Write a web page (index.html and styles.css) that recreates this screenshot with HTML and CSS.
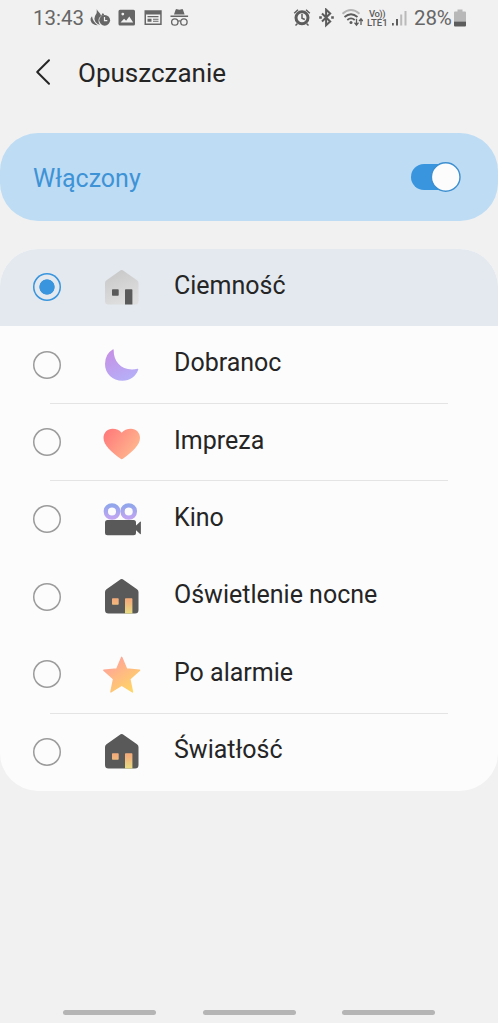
FILE: index.html
```html
<!DOCTYPE html>
<html lang="pl">
<head>
<meta charset="utf-8">
<title>Opuszczanie</title>
<link rel="stylesheet" href="styles.css">
</head>
<body>
<svg class="defs" width="0" height="0" aria-hidden="true">
  <defs>
    <linearGradient id="grey" x1="0" y1="0" x2="0.4" y2="1"><stop offset="0" stop-color="#c6c6c6"/><stop offset="1" stop-color="#dedede"/></linearGradient>
    <linearGradient id="violet" x1="0.2" y1="0" x2="0.7" y2="1"><stop offset="0" stop-color="#c690e6"/><stop offset="1" stop-color="#b5b0f8"/></linearGradient>
    <linearGradient id="coral" x1="0" y1="0.2" x2="1" y2="0.8"><stop offset="0" stop-color="#ff7b7b"/><stop offset="1" stop-color="#ffbd90"/></linearGradient>
    <linearGradient id="reel" x1="0" y1="0" x2="0" y2="1"><stop offset="0" stop-color="#91a6ec"/><stop offset="1" stop-color="#bfa5f2"/></linearGradient>
    <linearGradient id="glow" gradientUnits="userSpaceOnUse" x1="0" y1="21" x2="0" y2="36.500"><stop offset="0.200" stop-color="#f3ad7b"/><stop offset="1" stop-color="#e6dc82"/></linearGradient>
    <linearGradient id="gold" x1="0.2" y1="0.2" x2="0.8" y2="1"><stop offset="0" stop-color="#ffa795"/><stop offset="1" stop-color="#ffd764"/></linearGradient>
    <path id="house" d="M17.600 2.900Q19.700 1.200 21.800 2.900L35 12.200Q36.500 13.300 36.500 15V33Q36.500 36.500 33 36.500H6.500Q3 36.500 3 33V15Q3 13.300 4.500 12.200Z"/>
    <g id="openings"><rect x="10" y="21.300" width="6.700" height="6.500" rx=".7"/><path d="M23 36.500V22q0-.7.700-.7h6q.7 0 .7.700v14.500z"/></g>
  </defs>
</svg>
<div class="screen">
  <header class="status">
    <span class="clock">13:43</span>
    <svg class="status-left" width="100" height="20" viewBox="0 0 100 20" fill="#666">
      <path d="M6.800 1C7.500 3.500 10.500 4.500 11 8L12.800 5Q14 6 14.200 7.200Q8.300 8 8.500 13Q8.600 15.500 10 17Q7 16 5.500 14Q3.500 11 5 8Q7.500 4.500 6.800 1Z"/>
      <path d="M2 8.200Q0 10 .6 12.500Q2 17.200 8 17.300Q2.800 14 2 8.200Z"/>
      <circle cx="14.700" cy="12.300" r="5.400"/><path d="M14.500 9v3.600h2.800" fill="none" stroke="#f1f1f1" stroke-width="1.200"/>
      <path fill-rule="evenodd" d="M30 1.800h13.500q1.500 0 1.500 1.500v12.700q0 1.500-1.500 1.500H30q-1.500 0-1.500-1.500V3.300Q28.500 1.800 30 1.800ZM30.500 14.500h12.700l-3.900-6-3.200 4.300-2-2ZM32.800 4.700a1.400 1.400 0 1 0 0 2.800a1.400 1.400 0 1 0 0-2.800Z"/>
      <path fill-rule="evenodd" d="M54.500 2.200h17.200v14.800H54.500ZM56 6.500v9h14.200V6.500Z"/><path d="M57.500 8h11v1.300h-11zM57.500 10.800h4v3h-4zM63 10.800h5.500v1H63zM63 12.800h5.500v1H63z"/>
      <path d="M84 6.500L85.600 1.700Q86 .8 87 1.200L89.300 1.800L91.600 1.200Q92.600.8 93 1.700L94.600 6.500ZM80.500 7.600h17.600v1.400h-17.600z"/>
      <g fill="none" stroke="#666" stroke-width="1.300"><circle cx="84.800" cy="14" r="3.200"/><circle cx="93.900" cy="14" r="3.200"/><path d="M88 13.300q1.300-.8 2.700 0"/></g>
    </svg>
    <div class="status-right">
      <svg width="70" height="20" viewBox="0 0 70 20">
        <g fill="none" stroke="#5c5c5c"><circle cx="9" cy="9.700" r="6" stroke-width="3"/><path d="M1.200 5.200L5 1.700M13 1.700L16.800 5.200M4.500 15.500l-2 2M13.500 15.500l2 2M9 6v4.200l2.800 1.300" stroke-width="1.500"/></g>
        <path d="M29 5.500l8.200 8-4.100 3.800V1.600l4.100 3.900-8.200 8" fill="none" stroke="#5c5c5c" stroke-width="2"/><path d="M26.200 8.300h2.600v2.500h-2.600zM38.200 8.300h2.600v2.500h-2.600z" fill="#5c5c5c"/>
        <path d="M49.500 5.800Q58 -1.700 66.500 5.800" fill="none" stroke="#b4b4b4" stroke-width="1.900"/><path d="M51.500 9q6.500-5.600 13 0M54.300 12q3.700-3.200 7.400 0" fill="none" stroke="#5c5c5c" stroke-width="1.800"/><circle cx="58" cy="14.600" r="1.500" fill="#5c5c5c"/>
        <path d="M63.500 10.700v6.300M61.500 14.700l2 2.500 2-2.500M68 17v-6.300M66 13.200l2-2.500 2 2.500" fill="none" stroke="#5c5c5c" stroke-width="1.300"/>
      </svg>
      <div class="lte"><span class="vo">Vo))</span><span>LTE1</span></div>
      <svg class="signal" width="15" height="16" viewBox="0 0 15 16"><path d="M0 13h1.800v2.500H0zM4 9h2v6.500H4z" fill="#5c5c5c"/><path d="M8.200 4.500h2v11h-2zM12.500 1h2v14.500h-2z" fill="#bababa"/></svg>
      <span class="percent">28%</span>
      <svg class="battery" width="12" height="18" viewBox="0 0 12 18"><path d="M3.500 0.500h5v2H11q1 0 1 1v9H0V3.500q0-1 1-1h2.500z" fill="#b8b8b8"/><path d="M0 12.500h12v4q0 1-1 1H1q-1 0-1-1z" fill="#5c5c5c"/></svg>
    </div>
  </header>

  <div class="titlebar">
    <svg width="16" height="28" viewBox="0 0 16 28"><path d="M14 2.300L2.200 14L14 25.700" fill="none" stroke="#252525" stroke-width="2" stroke-linecap="round" stroke-linejoin="round"/></svg>
    <h1>Opuszczanie</h1>
  </div>

  <div class="master">
    <span>Włączony</span>
    <svg class="switch" width="50" height="30" viewBox="0 0 50 30"><rect x="0" y="2" width="48" height="26" rx="13" fill="#3895de"/><circle cx="34.700" cy="15" r="14.300" fill="#fcfcfc" stroke="#3c8fd0" stroke-width="1.400"/></svg>
  </div>

  <ul class="list">
    <li class="row selected"><i class="radio"></i><svg class="icon" viewBox="0 0 40 40"><use href="#house" fill="url(#grey)"/><use href="#openings" fill="#5a5a5a"/></svg><span>Ciemność</span></li>
    <li class="row"><i class="radio"></i><svg class="icon" viewBox="0 0 40 40"><path d="M10.700 4.500Q11.800 4 11.700 5.300C11.500 16 18.500 24.500 30 24.500Q32.800 24.500 35.500 23.800Q36.700 23.600 36.200 24.800C33.800 31.500 28 35.800 20.500 35.800C10.500 35.800 3 28.500 3 19Q3 9 10.700 4.500Z" fill="url(#violet)"/></svg><span>Dobranoc</span></li>
    <li class="row lined"><i class="radio"></i><svg class="icon" viewBox="0 0 40 40"><path d="M18.300 35.600C10 29 1.500 22.500 1.500 15C1.500 9.500 5.500 5.700 10.500 5.700Q16.500 5.700 19.700 9.700Q23 5.700 29 5.700C34 5.700 38 9.500 38 15C38 22.500 29.500 29 21.200 35.600Q19.700 36.900 18.300 35.600Z" fill="url(#coral)"/></svg><span>Impreza</span></li>
    <li class="row lined"><i class="radio"></i><svg class="icon" viewBox="0 0 40 40"><g fill="none" stroke="url(#reel)" stroke-width="4.300"><circle cx="10" cy="11.500" r="6.200"/><circle cx="26.700" cy="11.500" r="6.200"/></g><rect x="3" y="20" width="31" height="15.300" rx="2.500" fill="#595959"/><path d="M33.500 26L38.100 21.800Q38.900 21.300 38.900 22.200V33.500Q38.900 34.500 38.100 33.900L33.500 29.800Z" fill="#595959"/></svg><span>Kino</span></li>
    <li class="row"><i class="radio"></i><svg class="icon" viewBox="0 0 40 40"><use href="#house" fill="#595959"/><use href="#openings" fill="url(#glow)"/></svg><span>Oświetlenie nocne</span></li>
    <li class="row"><i class="radio"></i><svg class="icon" viewBox="0 0 40 40"><path d="M19.700 2.300L24.600 14L37.600 15.300L27.800 24L30.500 37L19.700 30.200L8.900 37L11.600 24L1.800 15.300L14.800 14Z" fill="url(#gold)" stroke="url(#gold)" stroke-width="1.400" stroke-linejoin="round"/></svg><span>Po alarmie</span></li>
    <li class="row lined"><i class="radio"></i><svg class="icon" viewBox="0 0 40 40"><use href="#house" fill="#595959"/><use href="#openings" fill="url(#glow)"/></svg><span>Światłość</span></li>
  </ul>

  <nav class="nav"><i></i><i></i><i></i></nav>
</div>
</body>
</html>
```
FILE: styles.css
```css
* { box-sizing: border-box; }
body { margin: 0; font-family: Roboto, "Noto Sans", sans-serif; color: #252525; background: #f1f1f1; }
.defs { display: block; position: absolute; }
.screen { width: 498px; height: 1023px; display: flex; flex-direction: column; overflow: hidden; }
.status { height: 36px; padding: 0 32px 0 33px; display: flex; align-items: center; color: #666; font-size: 20.5px; line-height: 36px; }
.clock { width: 57px; white-space: nowrap; }
.status-right { margin-left: auto; display: flex; align-items: center; }
.lte { width: 21px; margin-left: 4px; display: flex; flex-direction: column; font-size: 9.500px; line-height: 9px; font-weight: 500; white-space: nowrap; color: #5c5c5c; }
.vo { padding-left: 2px; letter-spacing: -0.5px; }
.signal { margin-left: 4px; }
.percent { width: 40px; margin-left: 7px; white-space: nowrap; letter-spacing: -0.1px; }
.titlebar { height: 97px; padding: 22px 0 0 35px; display: flex; align-items: flex-start; }
.titlebar h1 { margin: 0 0 0 27px; font-size: 26px; line-height: 30px; font-weight: 400; }
.master { height: 88px; border-radius: 38px; background: #bedcf4; padding: 0 37px 0 33px; display: flex; align-items: center; justify-content: space-between; color: #3e93d6; font-size: 25px; flex: none; }
.master span { padding-top: 2px; }
.list { list-style: none; margin: 28px 0 0; padding: 0; height: 542px; flex: none; display: grid; grid-template-rows: repeat(7, 1fr); border-radius: 38px; background: #fcfcfc; overflow: hidden; }
.row { position: relative; display: flex; align-items: center; padding-left: 33px; font-size: 25px; }
.row.selected { background: #e3e9ef; }
.row.lined::before { content: ""; position: absolute; left: 50px; top: -1px; width: 398px; height: 1px; background: #e4e4e4; }
.radio { width: 28px; height: 28px; margin-top: -1px; flex: none; box-shadow: inset 0 0 0 1.500px #9b9b9b; border-radius: 50%; }
.selected .radio { box-shadow: inset 0 0 0 1.500px #3895de; background: radial-gradient(circle, #3895de 7.300px, transparent 8px); }
.icon { width: 40px; height: 40px; margin-left: 41px; flex: none; }
.row span { margin: -5px 0 0 32px; white-space: nowrap; }
.nav { margin-top: auto; padding: 0 63px 8px; display: flex; justify-content: space-between; }
.nav i { width: 93px; height: 5px; border-radius: 3px; background: #b5b5b5; }
```
